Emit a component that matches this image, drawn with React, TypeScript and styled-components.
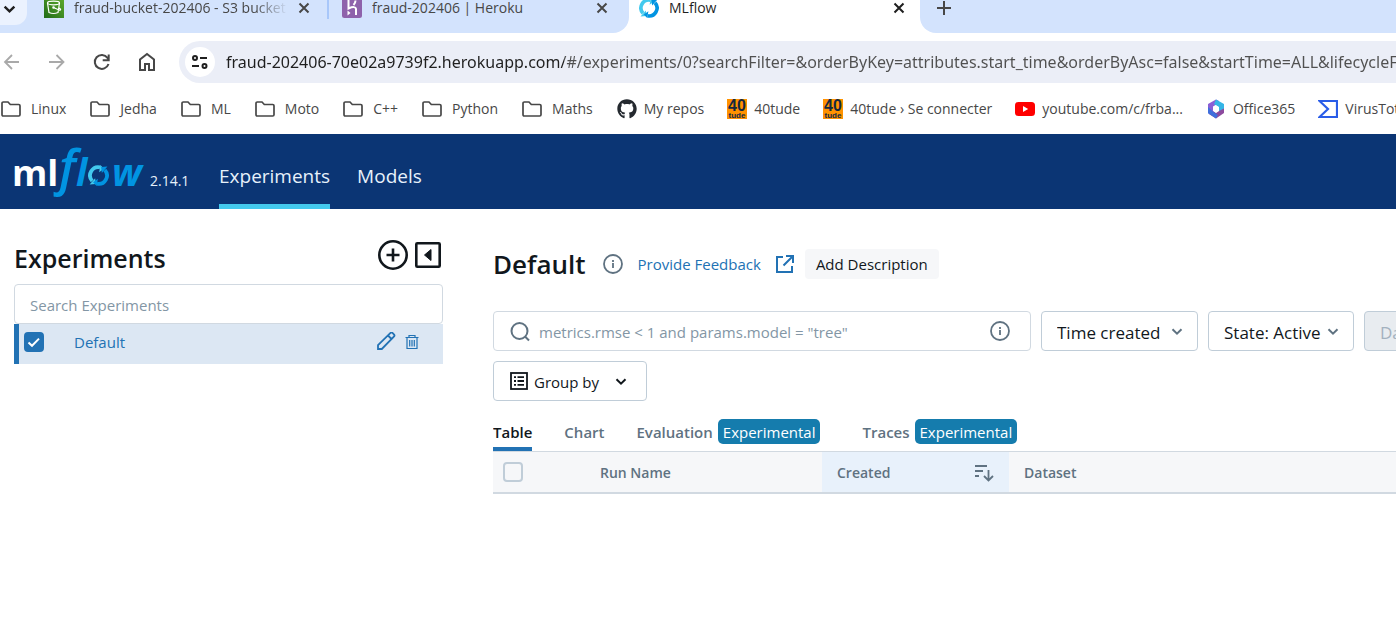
import React from "react";
import styled, { createGlobalStyle } from "styled-components";
import { FaGithub } from "react-icons/fa";

const GlobalStyle = createGlobalStyle`
  * { box-sizing: border-box; }
  body {
    margin: 0;
    background: #fff;
    color: #11171c;
    font-family: "Open Sans", "Noto Sans", sans-serif;
    font-size: 15px;
    line-height: 20px;
    overflow-x: hidden;
  }
  button, input, select { font: inherit; color: inherit; margin: 0; }
  svg { display: block; flex: none; }
  h1, h2 { margin: 0; }
`;

/* ---------- browser chrome ---------- */

const TabStrip = styled.div`
  display: flex;
  height: 33px;
  overflow: hidden;
  background: #fff;
`;

const TabGroup = styled.div<{ $side: "left" | "right" }>`
  display: flex;
  flex: ${(p) => (p.$side === "left" ? "none" : "1")};
  padding-right: 21px;
  background: #d3e3fd;
  border-radius: ${(p) => (p.$side === "left" ? "0 0 16px 0" : "0 0 0 16px")};
`;

const TabSearch = styled.button`
  width: 27px;
  height: 25px;
  margin-right: 7px;
  padding: 0 0 9px 3px;
  border: 0;
  border-radius: 0 0 12px 0;
  background: #ebf2fe;
  color: #1f1f1f;
  display: flex;
  align-items: center;
`;

const BrowserTab = styled.div<{ $active?: boolean }>`
  display: flex;
  align-items: center;
  gap: 10px;
  flex: none;
  width: ${(p) => (p.$active ? 291 : 276)}px;
  padding: 0 ${(p) => (p.$active ? 15 : 0)}px 17px 10px;
  background: ${(p) => (p.$active ? "#fff" : "transparent")};
  color: ${(p) => (p.$active ? "#1f1f1f" : "#474747")};
  font-size: 14px;
  line-height: 16px;
`;

const TabTitle = styled.span<{ $fade?: boolean }>`
  flex: 1;
  min-width: 0;
  overflow: hidden;
  white-space: nowrap;
  mask-image: ${(p) =>
    p.$fade ? "linear-gradient(90deg, #000 calc(100% - 34px), transparent)" : "none"};
`;

const TabDivider = styled.span`
  width: 2px;
  height: 19px;
  margin: 0 3px 0 17px;
  background: #a8c7fa;
`;

const PlainButton = styled.button`
  display: flex;
  align-items: center;
  justify-content: center;
  padding: 0;
  border: 0;
  background: none;
`;

const NewTab = styled(PlainButton)`
  height: 16px;
  margin-left: 17px;
  color: #474747;
`;

const Toolbar = styled.div`
  display: flex;
  align-items: center;
  height: 58px;
  color: #474747;
`;

const NavButtons = styled.div`
  display: flex;
  gap: 21px;
  flex: none;
  width: 179px;
`;

const NavButton = styled(PlainButton)<{ $dim?: boolean }>`
  width: 24px;
  height: 24px;
  color: ${(p) => (p.$dim ? "#a9a9a9" : "#474747")};
`;

const AddressBar = styled.div`
  display: flex;
  align-items: center;
  gap: 11px;
  flex: 1;
  min-width: 0;
  height: 42px;
  padding-left: 6px;
  border-radius: 21px 0 0 21px;
  background: #ebeef7;
`;

const SiteInfo = styled(PlainButton)`
  flex: none;
  width: 30px;
  height: 30px;
  border-radius: 50%;
  background: #fff;
  color: #1f1f1f;
`;

const Address = styled.input`
  flex: 1;
  min-width: 0;
  height: 28px;
  padding: 0;
  border: 0;
  outline: 0;
  font-family: "Noto Sans", "Open Sans", sans-serif;
  font-size: 16px;
  color: #474747;
  background: linear-gradient(90deg, #1f1f1f 338px, #505050 338px);
  background-clip: text;
  -webkit-text-fill-color: transparent;
`;

const Bookmarks = styled.nav`
  display: flex;
  align-items: center;
  height: 43px;
  padding: 0 0 7px 1px;
  overflow: hidden;
`;

const Bookmark = styled.a<{ $folder?: boolean }>`
  display: flex;
  align-items: center;
  flex: none;
  gap: ${(p) => (p.$folder ? 10 : 7)}px;
  height: 36px;
  margin-right: ${(p) => (p.$folder ? 24 : 23)}px;
  font-size: 14px;
  color: #474747;
  text-decoration: none;
  white-space: nowrap;
`;

/* ---------- application ---------- */

const Header = styled.header`
  display: flex;
  align-items: stretch;
  height: 75px;
  padding-left: 12px;
  background: #0b3574;
  color: #e7f1fb;
`;

const Brand = styled.div`
  display: flex;
  width: 207px;
  font-size: 14px;
`;

const Version = styled.span`
  padding: 37px 0 0 4px;
`;

const HeaderNav = styled.nav`
  display: flex;
  gap: 27px;
`;

const HeaderLink = styled.a<{ $active?: boolean }>`
  padding-top: 28px;
  border-bottom: 5px solid ${(p) => (p.$active ? "#43c9ed" : "transparent")};
  font-size: 19px;
  line-height: 28px;
  color: inherit;
  text-decoration: none;
`;

const Page = styled.div`
  display: flex;
  gap: 50px;
  padding-left: 14px;
`;

const Sidebar = styled.aside`
  flex: none;
  width: 429px;
  padding-top: 29px;
`;

const SidebarHead = styled.div`
  display: flex;
  align-items: center;
  height: 34px;
  margin-bottom: 12px;
  padding-right: 1px;
`;

const Title = styled.h1`
  font-size: 26px;
  line-height: 36px;
  font-weight: 600;
`;

const SidebarTitle = styled(Title)`
  flex: 1;
  padding-top: 6px;
  font-size: 25px;
`;

const HeadButton = styled(PlainButton)`
  height: 34px;
  margin-left: 5px;
`;

const SidebarSearch = styled.input`
  display: block;
  width: 100%;
  height: 40px;
  padding: 2px 15px 0;
  border: 1px solid #d1d9e1;
  border-radius: 4px;
  outline: 0;
  &::placeholder { color: #8396a5; opacity: 1; }
`;

const ExperimentRow = styled.div`
  display: flex;
  align-items: center;
  height: 40px;
  padding: 0 24px 4px 5px;
  border-left: 5px solid #2272b4;
  background: #dce7f3;
  color: #2272b4;
`;

const Check = styled.input`
  appearance: none;
  display: block;
  flex: none;
  width: 20px;
  height: 20px;
  border: 2px solid #c0cdd8;
  border-radius: 4px;
  background: transparent;
  &:checked {
    border-color: #2272b4;
    background: #2272b4
      url("data:image/svg+xml,%3Csvg xmlns='http://www.w3.org/2000/svg' viewBox='0 0 16 16'%3E%3Cpath d='M2.5 8.5l3.5 3.3 7-7.2' fill='none' stroke='white' stroke-width='2'/%3E%3C/svg%3E")
      center / 16px no-repeat;
  }
`;

const ExperimentLink = styled.a`
  flex: 1;
  margin-left: 30px;
  color: inherit;
  text-decoration: none;
`;

const RowButton = styled(PlainButton)`
  height: 24px;
  margin-left: 9px;
`;

const Main = styled.main`
  flex: 1;
  min-width: 0;
  overflow: hidden;
  padding-top: 40px;
`;

const TitleRow = styled.div`
  display: flex;
  align-items: center;
  height: 30px;
  margin-bottom: 32px;
`;

const InfoButton = styled(PlainButton)`
  margin-left: 17px;
  color: #5f7281;
`;

const FeedbackLink = styled.a`
  display: flex;
  align-items: center;
  gap: 14px;
  margin: 0 10px 0 15px;
  color: #2272b4;
  text-decoration: none;
`;

const DescriptionButton = styled.button`
  height: 30px;
  padding: 0 11px;
  border: 0;
  border-radius: 4px;
  background: #f6f7f9;
`;

const Filters = styled.div`
  display: flex;
  gap: 10px;
  margin-bottom: 10px;
`;

const SearchBox = styled.label`
  display: flex;
  align-items: center;
  flex: none;
  gap: 8px;
  width: 538px;
  height: 40px;
  padding: 0 20px 0 16px;
  border: 1px solid #d1d9e1;
  border-radius: 4px;
  color: #5f7281;
`;

const SearchInput = styled.input`
  flex: 1;
  height: 28px;
  padding: 2px 0 0;
  border: 0;
  outline: 0;
  background: none;
  &::placeholder { color: #8396a5; opacity: 1; }
`;

const SelectBox = styled.div<{ $width: number; $disabled?: boolean }>`
  display: grid;
  grid-template-columns: 1fr 40px;
  align-items: center;
  flex: none;
  width: ${(p) => p.$width}px;
  height: 40px;
  border: 1px solid #c0cdd8;
  border-radius: 4px;
  background: ${(p) => (p.$disabled ? "#e8ecf0" : "#fff")};
  color: ${(p) => (p.$disabled ? "#a3b1bf" : "#11171c")};
  svg { grid-area: 1 / 2; justify-self: center; color: #5f7281; pointer-events: none; }
`;

const Select = styled.select`
  appearance: none;
  grid-area: 1 / 1 / 2 / 3;
  width: 100%;
  height: 38px;
  padding: 3px 0 0 15px;
  border: 0;
  outline: 0;
  background: none;
  font-size: 17px;
  &:disabled { opacity: 1; color: inherit; }
`;

const GroupButton = styled.button`
  display: flex;
  align-items: center;
  width: 154px;
  height: 40px;
  padding: 0 19px 0 16px;
  border: 1px solid #c0cdd8;
  border-radius: 4px;
  background: #fff;
  span { flex: 1; padding: 2px 0 0 6px; text-align: left; }
`;

const Tabs = styled.div`
  display: flex;
  gap: 32px;
  height: 40px;
  margin-top: 10px;
`;

const Tab = styled.button<{ $active?: boolean }>`
  display: flex;
  align-items: center;
  gap: 5px;
  height: 40px;
  padding: 5px 0 0;
  border: 0;
  border-bottom: 4px solid ${(p) => (p.$active ? "#2272b4" : "transparent")};
  background: none;
  font-weight: 600;
  color: ${(p) => (p.$active ? "#11171c" : "#5f7281")};
`;

const Badge = styled.span`
  height: 25px;
  margin-right: 10px;
  padding: 0 5px;
  border-radius: 5px;
  background: #157cad;
  color: #fff;
  line-height: 26px;
  font-weight: 500;
`;

const RunsTable = styled.table`
  width: 100%;
  table-layout: fixed;
  border-collapse: separate;
  border-spacing: 0;
`;

const HeadCell = styled.th<{ $width?: number; $sorted?: boolean; $narrow?: boolean }>`
  width: ${(p) => (p.$width ? `${p.$width}px` : "auto")};
  height: 43px;
  padding: ${(p) => (p.$narrow ? "0 10px" : "2px 15px 0")};
  border-top: 1px solid #d1d9e1;
  border-bottom: 2px solid #d1d9e1;
  background: ${(p) => (p.$sorted ? "#e8f1fb" : "#f6f7f9")};
  color: #5f7281;
  font-size: 14px;
  font-weight: 600;
  text-align: left;
`;

const SortedLabel = styled.div`
  display: flex;
  align-items: center;
  justify-content: space-between;
`;

/* ---------- icons ---------- */

const Chevron = ({ size = 12, weight = 2 }: { size?: number; weight?: number }) => (
  <svg width={size} height={size} viewBox="0 0 12 12" fill="none" stroke="currentColor" strokeWidth={weight}>
    <path d="M1.500 4.200L6 8.700l4.500-4.500" />
  </svg>
);

const Cross = () => (
  <svg width="12" height="12" viewBox="0 0 12 12" fill="none" stroke="currentColor" strokeWidth="2">
    <path d="M1.500 1.500l9 9M10.500 1.500l-9 9" />
  </svg>
);

const Folder = () => (
  <svg width="20" height="18" viewBox="0 0 20 18" fill="none" stroke="#474747" strokeWidth="1.700">
    <path d="M1 14.500V3.300Q1 2 2.300 2H7l2.300 2.500h8.400Q19 4.500 19 5.800v8.900q0 1.300-1.300 1.300H2.300Q1 16 1 14.500z" />
  </svg>
);

const BucketIcon = () => (
  <svg width="20" height="20" viewBox="0 0 20 20">
    <defs>
      <linearGradient id="bucketFill" x1="0" y1="1" x2="1" y2="0">
        <stop offset="0" stopColor="#1f6b18" />
        <stop offset="1" stopColor="#5fab2c" />
      </linearGradient>
    </defs>
    <rect width="20" height="20" fill="url(#bucketFill)" />
    <g fill="none" stroke="#fff" strokeWidth="1.200">
      <ellipse cx="9.500" cy="5" rx="6" ry="1.800" />
      <path d="M3.500 5l1.500 9.500q4.500 2 9 0L15.500 5M9.500 9.500l5.500 2.500q2 .5 1.500-1l-2-1.500" />
      <circle cx="9.500" cy="9.500" r=".7" />
    </g>
  </svg>
);

const HerokuIcon = () => (
  <svg width="20" height="20" viewBox="0 0 20 20">
    <rect width="20" height="20" rx="2.500" fill="#8e62ab" />
    <path d="M6.500 2v8.500q7-3 7.500.5V17M13.500 2.500q0 2.500-2 4.500" fill="none" stroke="#fff" strokeWidth="2" />
    <path d="M5.500 12.500l3 2.500-3 2.500z" fill="#fff" />
  </svg>
);

const CycleMark = ({ size }: { size: number }) => (
  <svg width={size} height={size} viewBox="0 0 20 20">
    <path d="M4 15.200A7.900 7.900 0 0 1 11.500 2.200" fill="none" stroke="#43c9ed" strokeWidth="3.600" />
    <path d="M11.800 0l3.400 3.600-4.600 3.200zM1.500 18.500l6-.5-.7-5.500z" fill="#43c9ed" />
    <path d="M16 4.800A7.900 7.900 0 0 1 8.500 17.800" fill="none" stroke="#0194e2" strokeWidth="3.600" />
    <path d="M8.200 20l-3.400-3.600 4.600-3.200zM18.500 1.500l-6 .5.700 5.500z" fill="#0194e2" />
  </svg>
);

const FortyTudeIcon = () => (
  <svg width="20" height="20" viewBox="0 0 20 20" fontFamily="Liberation Sans Narrow, Liberation Sans, sans-serif" fontWeight="700" textAnchor="middle" fill="#14283f">
    <rect width="20" height="20" fill="#ff9200" />
    <text x="10" y="12" fontSize="16">40</text>
    <text x="10" y="19" fontSize="8">tude</text>
  </svg>
);

const YouTubeIcon = () => (
  <svg width="20" height="20" viewBox="0 0 20 20">
    <rect y="3" width="20" height="14" rx="3.500" fill="#f00" />
    <path d="M8 7l5.200 3L8 13z" fill="#fff" />
  </svg>
);

const OfficeIcon = () => (
  <svg width="20" height="20" viewBox="0 0 20 20">
    <path d="M10 .5L2 5v9l3.500 2 4-2.500L7 12V7.500l6-3.500V2z" fill="#8a5fd6" />
    <path d="M10 .5l8 4.500v8l-5-1V8L8 5z" fill="#35b5e6" />
    <path d="M18 9.500V14l-8 5.500L3 15l4-2.500 3 1.500 3-2z" fill="#8d4a9e" />
    <path d="M2 8v6.300L10 19.500l2-3.500-5-3.500z" fill="#3f6fdc" />
    <path d="M10 6.500l3 1.700v3.600l-3 1.700-3-1.700V8.200z" fill="#fff" />
  </svg>
);

const VirusTotalIcon = () => (
  <svg width="20" height="20" viewBox="0 0 20 20">
    <path d="M1.500 2H19v16H1.500L10 10z" fill="none" stroke="#2a5de8" strokeWidth="2.200" />
  </svg>
);

const InfoIcon = () => (
  <svg width="20" height="20" viewBox="0 0 20 20" fill="none" stroke="currentColor">
    <circle cx="10" cy="10" r="9" strokeWidth="1.800" />
    <path d="M10 9v5M10 6v2" strokeWidth="1.800" />
  </svg>
);

const Logo = () => (
  <svg width="134" height="75" viewBox="0 0 134 75" fontFamily="Open Sans, sans-serif" fill="#0194e2">
    <text x="0" y="52" fontSize="36" fontWeight="700" fill="#fff">ml</text>
    <text x="47" y="51" fontSize="49" fontWeight="600" fontStyle="italic">f</text>
    <text x="64" y="52" fontSize="38" fontWeight="700" fontStyle="italic">l</text>
    <g transform="translate(76 31)"><CycleMark size={21} /></g>
    <text x="100" y="52" fontSize="38" fontWeight="700" fontStyle="italic">w</text>
  </svg>
);

const bookmarks: { label: string; icon?: React.ReactNode }[] = [
  { label: "Linux" },
  { label: "Jedha" },
  { label: "ML" },
  { label: "Moto" },
  { label: "C++" },
  { label: "Python" },
  { label: "Maths" },
  { label: "My repos", icon: <FaGithub size={20} color="#24292f" /> },
  { label: "40tude", icon: <FortyTudeIcon /> },
  { label: "40tude › Se connecter", icon: <FortyTudeIcon /> },
  { label: "youtube.com/c/frba...", icon: <YouTubeIcon /> },
  { label: "Office365", icon: <OfficeIcon /> },
  { label: "VirusTotal", icon: <VirusTotalIcon /> },
];

const address =
  "fraud-202406-70e02a9739f2.herokuapp.com/#/experiments/0?searchFilter=&orderByKey=attributes.start_time&orderByAsc=false&startTime=ALL&lifecycleFilter=Active";

export default function App() {
  return (
    <>
      <GlobalStyle />
      <TabStrip>
        <TabGroup $side="left">
          <TabSearch aria-label="Search tabs"><Chevron size={13} weight={2.200} /></TabSearch>
          <BrowserTab>
            <BucketIcon />
            <TabTitle $fade>fraud-bucket-202406 - S3 bucket | S3</TabTitle>
            <PlainButton aria-label="Close tab"><Cross /></PlainButton>
          </BrowserTab>
          <TabDivider />
          <BrowserTab>
            <HerokuIcon />
            <TabTitle>fraud-202406 | Heroku</TabTitle>
            <PlainButton aria-label="Close tab"><Cross /></PlainButton>
          </BrowserTab>
        </TabGroup>
        <BrowserTab $active>
          <CycleMark size={20} />
          <TabTitle>MLflow</TabTitle>
          <PlainButton aria-label="Close tab"><Cross /></PlainButton>
        </BrowserTab>
        <TabGroup $side="right">
          <NewTab aria-label="New tab">
            <svg width="14" height="14" viewBox="0 0 14 14" stroke="currentColor" strokeWidth="2">
              <path d="M7 0v14M0 7h14" />
            </svg>
          </NewTab>
        </TabGroup>
      </TabStrip>

      <Toolbar>
        <NavButtons>
          <NavButton $dim aria-label="Back">
            <svg width="24" height="24" viewBox="0 0 24 24" fill="none" stroke="currentColor" strokeWidth="1.800">
              <path d="M19 12H5M12 5l-7 7 7 7" />
            </svg>
          </NavButton>
          <NavButton $dim aria-label="Forward">
            <svg width="24" height="24" viewBox="0 0 24 24" fill="none" stroke="currentColor" strokeWidth="1.800">
              <path d="M4 12h14M11.500 5l7 7-7 7" />
            </svg>
          </NavButton>
          <NavButton aria-label="Reload">
            <svg width="24" height="24" viewBox="0 0 24 24" fill="none" stroke="currentColor" strokeWidth="2">
              <path d="M18.500 14A7 7 0 1 1 17.500 7.800L18.500 9M18.700 4.500v5.800h-6" />
            </svg>
          </NavButton>
          <NavButton aria-label="Home">
            <svg width="24" height="24" viewBox="0 0 24 24" fill="none" stroke="currentColor" strokeWidth="2">
              <path d="M5 20V9.500L12 4l7 5.500V20h-5v-6h-4v6z" />
            </svg>
          </NavButton>
        </NavButtons>
        <AddressBar>
          <SiteInfo aria-label="View site information">
            <svg width="18" height="18" viewBox="0 0 18 18" fill="none" stroke="currentColor" strokeWidth="2">
              <circle cx="4" cy="5" r="2" />
              <path d="M9 5h7M1 13h7" />
              <circle cx="13.500" cy="13" r="2" />
            </svg>
          </SiteInfo>
          <Address aria-label="Address" defaultValue={address} />
        </AddressBar>
      </Toolbar>

      <Bookmarks aria-label="Bookmarks">
        {bookmarks.map((b) => (
          <Bookmark key={b.label} href="#" $folder={!b.icon}>
            {b.icon ?? <Folder />}
            {b.label}
          </Bookmark>
        ))}
      </Bookmarks>

      <Header>
        <Brand>
          <Logo />
          <Version>2.14.1</Version>
        </Brand>
        <HeaderNav>
          <HeaderLink href="#experiments" $active>Experiments</HeaderLink>
          <HeaderLink href="#models">Models</HeaderLink>
        </HeaderNav>
      </Header>

      <Page>
        <Sidebar>
          <SidebarHead>
            <SidebarTitle as="h2">Experiments</SidebarTitle>
            <HeadButton aria-label="New experiment">
              <svg width="32" height="32" viewBox="0 0 32 32" fill="none" stroke="#11171c" strokeWidth="2.600">
                <circle cx="16" cy="16" r="13.700" />
                <path d="M16 9.500v13M9.500 16h13" />
              </svg>
            </HeadButton>
            <HeadButton aria-label="Hide experiment list">
              <svg width="28" height="28" viewBox="0 0 28 28">
                <rect x="2.300" y="2.300" width="23.400" height="23.400" rx="1" fill="none" stroke="#11171c" strokeWidth="2.600" />
                <path d="M17 8.500v11L10.500 14z" fill="#11171c" stroke="#11171c" strokeLinejoin="round" />
              </svg>
            </HeadButton>
          </SidebarHead>
          <SidebarSearch aria-label="Search Experiments" placeholder="Search Experiments" />
          <ExperimentRow>
            <Check type="checkbox" defaultChecked aria-label="Select Default" />
            <ExperimentLink href="#default">Default</ExperimentLink>
            <RowButton aria-label="Rename experiment">
              <svg width="20" height="20" viewBox="0 0 20 20" fill="none" stroke="currentColor" strokeWidth="1.800">
                <path d="M2 17v-3.800L14.500 .900q1-.8 2 0l1.600 1.600q.8 1 0 2L5.800 17zM12 3.500L15.500 7" />
              </svg>
            </RowButton>
            <RowButton aria-label="Delete experiment">
              <svg width="14" height="16" viewBox="0 0 14 16" fill="none" stroke="currentColor" strokeWidth="1.200">
                <path d="M.5 3.500h13M4 3V1.500h6V3M2 4v10.500h10V4M4.700 6v6.500M7 6v6.500M9.300 6v6.500" />
              </svg>
            </RowButton>
          </ExperimentRow>
        </Sidebar>

        <Main>
          <TitleRow>
            <Title>Default</Title>
            <InfoButton aria-label="Experiment details"><InfoIcon /></InfoButton>
            <FeedbackLink href="#feedback">
              Provide Feedback
              <svg width="20" height="20" viewBox="0 0 20 20" fill="none" stroke="currentColor" strokeWidth="2">
                <path d="M8 3H2v15h15v-6M11 2h7v7M18 2L8.500 11.500" />
              </svg>
            </FeedbackLink>
            <DescriptionButton>Add Description</DescriptionButton>
          </TitleRow>

          <Filters>
            <SearchBox>
              <svg width="21" height="21" viewBox="0 0 21 21" fill="none" stroke="currentColor" strokeWidth="2">
                <circle cx="9.500" cy="10" r="8" />
                <path d="M15 15.500l4 4" />
              </svg>
              <SearchInput aria-label="Search runs" placeholder={'metrics.rmse < 1 and params.model = "tree"'} />
              <InfoIcon />
            </SearchBox>
            <SelectBox $width={157}>
              <Select aria-label="Time created"><option>Time created</option></Select>
              <Chevron />
            </SelectBox>
            <SelectBox $width={146}>
              <Select aria-label="State"><option>State: Active</option></Select>
              <Chevron />
            </SelectBox>
            <SelectBox $width={124} $disabled>
              <Select aria-label="Datasets" disabled><option>Datasets</option></Select>
              <Chevron />
            </SelectBox>
          </Filters>
          <GroupButton>
            <svg width="18" height="18" viewBox="0 0 18 18" fill="none" stroke="#11171c" strokeWidth="1.800">
              <rect x="1" y="1" width="16" height="16" />
              <path d="M4 5.200h2M7.500 5.200H14M4 9h2M7.500 9H14M4 12.800h2M7.500 12.800H14" />
            </svg>
            <span>Group by</span>
            <Chevron />
          </GroupButton>

          <Tabs role="tablist">
            <Tab role="tab" $active>Table</Tab>
            <Tab role="tab">Chart</Tab>
            <Tab role="tab">Evaluation<Badge>Experimental</Badge></Tab>
            <Tab role="tab">Traces<Badge>Experimental</Badge></Tab>
          </Tabs>
          <RunsTable>
            <thead>
              <tr>
                <HeadCell $width={92} $narrow><Check type="checkbox" aria-label="Select all runs" /></HeadCell>
                <HeadCell $width={237}>Run Name</HeadCell>
                <HeadCell $width={187} $sorted>
                  <SortedLabel>
                    Created
                    <svg width="20" height="18" viewBox="0 0 20 18" fill="none" stroke="currentColor" strokeWidth="1.800">
                      <path d="M1 2h12M1 7h8M1 12h4M14.500 6v10M10 12l4.500 4.500L19 12" />
                    </svg>
                  </SortedLabel>
                </HeadCell>
                <HeadCell>Dataset</HeadCell>
              </tr>
            </thead>
          </RunsTable>
        </Main>
      </Page>
    </>
  );
}
